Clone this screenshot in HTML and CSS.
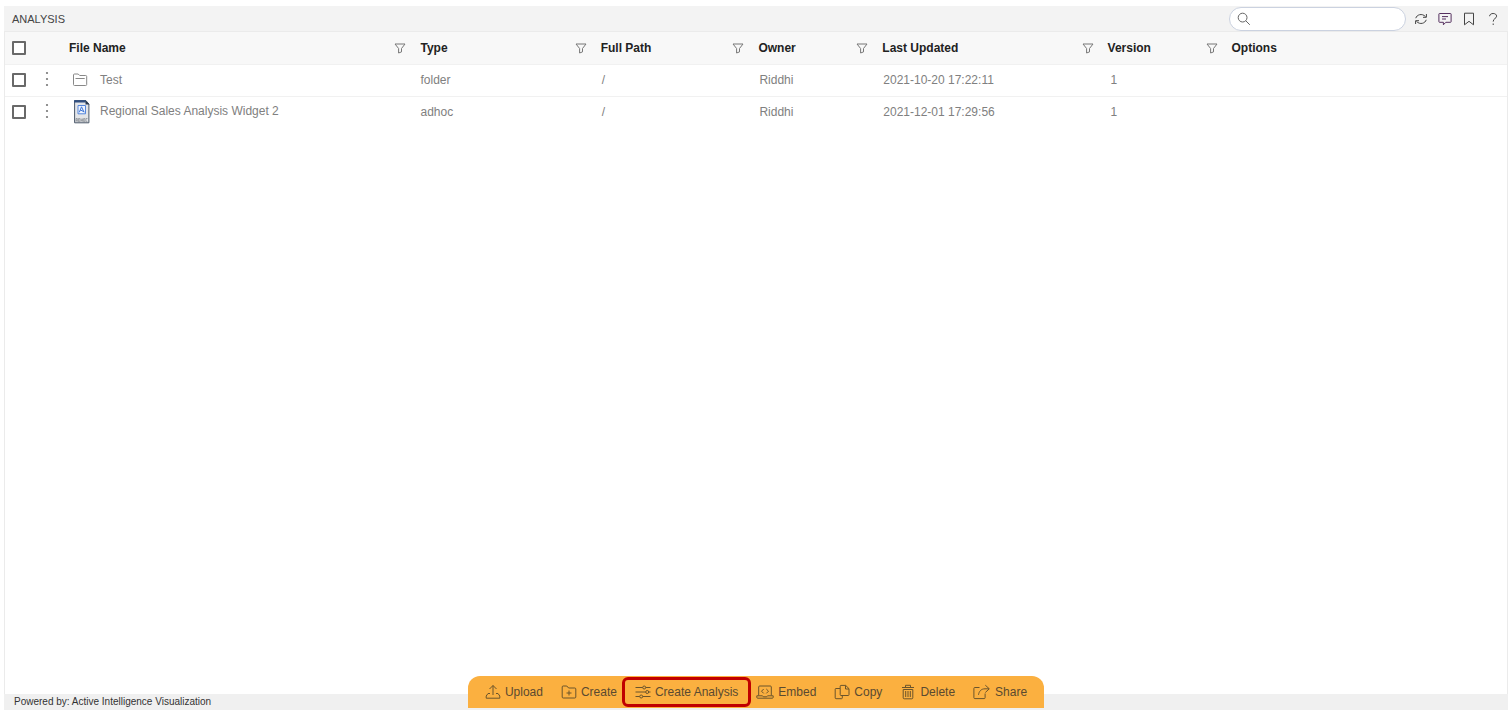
FILE: index.html
```html
<!DOCTYPE html>
<html lang="en">
<head>
<meta charset="utf-8">
<title>Analysis</title>
<link rel="stylesheet" href="styles.css">
</head>
<body>
<svg class="sprite" aria-hidden="true">
  <symbol id="filter" viewBox="0 0 12 12"><path d="M1 2h10L7.500 6.500v3.400L4.600 11V6.500z"/></symbol>
  <symbol id="dots" viewBox="0 0 4 16"><circle cx="2" cy="2" r="1.1"/><circle cx="2" cy="8" r="1.1"/><circle cx="2" cy="14" r="1.1"/></symbol>
</svg>
<div class="app">
  <header class="topbar">
    <h1 class="title">ANALYSIS</h1>
    <label class="search">
      <svg class="search-icon" viewBox="0 0 14 14" aria-hidden="true"><circle cx="5.6" cy="5.6" r="4.4"/><path d="M8.800 8.800l4 4"/></svg>
      <input class="search-input" type="text" aria-label="Search">
    </label>
    <nav class="tools">
      <button class="tool" type="button" aria-label="Refresh"><svg viewBox="0 0 14 14"><path d="M1.800 6.200C2.600 2.800 8 .8 11.500 4.600M12.400 2v3.300H9M12.200 7.800C11.400 11.200 6 13.200 2.500 9.400M1.600 12V8.700H5"/></svg></button>
      <button class="tool tool-comment" type="button" aria-label="Comments"><svg viewBox="0 0 14 14"><path d="M1.500 1.500h11q.6 0 .6.6v7.600q0 .6-.6.6H7.800L5.400 12.800v-2.500H1.500q-.6 0-.6-.6V2.100q0-.6.6-.6zM4 4.600h6M4 7h4"/></svg></button>
      <button class="tool" type="button" aria-label="Bookmark"><svg viewBox="0 0 14 14"><path d="M2.500 1.200h9v11.600L7 9.300 2.500 12.800z"/></svg></button>
      <button class="tool" type="button" aria-label="Help"><svg viewBox="0 0 14 14"><path d="M3.600 4.200C3.700 2.400 5.200 1.500 7.100 1.500c2 0 3.500 1 3.500 2.700C10.600 6.500 7.200 6.400 7.200 9.600M7.200 11.500v1.500"/></svg></button>
    </nav>
  </header>
  <main class="content">
    <table class="files">
      <colgroup><col class="c-check"><col class="c-menu"><col class="c-name"><col class="c-type"><col class="c-path"><col class="c-owner"><col class="c-date"><col class="c-version"><col></colgroup>
      <thead>
        <tr>
          <th><input class="check" type="checkbox" aria-label="Select all"></th>
          <th></th>
          <th><div class="head">File Name<button class="filter" type="button" aria-label="Filter file name"><svg><use href="#filter"/></svg></button></div></th>
          <th><div class="head">Type<button class="filter" type="button" aria-label="Filter type"><svg><use href="#filter"/></svg></button></div></th>
          <th><div class="head">Full Path<button class="filter" type="button" aria-label="Filter full path"><svg><use href="#filter"/></svg></button></div></th>
          <th><div class="head">Owner<button class="filter" type="button" aria-label="Filter owner"><svg><use href="#filter"/></svg></button></div></th>
          <th><div class="head">Last Updated<button class="filter" type="button" aria-label="Filter last updated"><svg><use href="#filter"/></svg></button></div></th>
          <th><div class="head">Version<button class="filter" type="button" aria-label="Filter version"><svg><use href="#filter"/></svg></button></div></th>
          <th><div class="head">Options</div></th>
        </tr>
      </thead>
      <tbody>
        <tr>
          <td><input class="check" type="checkbox" aria-label="Select Test"></td>
          <td><button class="more" type="button" aria-label="Actions for Test"><svg><use href="#dots"/></svg></button></td>
          <td><div class="file"><svg class="file-icon folder" viewBox="0 0 18 24"><path d="M1.500 16.500V7q0-1 1-1h3.700l1.500 1.500h6q1 0 1 1v8q0 1-1 1H2.500q-1 0-1-1zM3.500 10.500h9.200"/></svg>Test</div></td>
          <td class="type">folder</td><td class="path">/</td><td>Riddhi</td><td>2021-10-20 17:22:11</td><td class="version">1</td><td></td>
        </tr>
        <tr>
          <td><input class="check" type="checkbox" aria-label="Select Regional Sales Analysis Widget 2"></td>
          <td><button class="more" type="button" aria-label="Actions for Regional Sales Analysis Widget 2"><svg><use href="#dots"/></svg></button></td>
          <td><div class="file"><svg class="file-icon" viewBox="0 0 18 24"><path d="M2.600.6h11.300l3 3.400v18.800H2.600z" fill="#e3e5e8" stroke="#4b5868"/><path d="M2.100.2h11.700v2.300H2.100z" fill="#304f80" stroke="none"/><path d="M13.500.2v4.300h4z" fill="#28394f" stroke="none"/><path d="M6 5.500h7.500v8.300H6z" fill="#eef4ff" stroke="#5486dc"/><path d="M7.300 12.300l2.200-5.500 2.600 5.500M8 9.800l4.200 2" stroke="#4077d5"/><path d="M4 21.800v-3.300h1.300v3.300M4 20.200h1.300M6.500 18.500v3.300h1.300v-3.300zM9 18.500v3.300m1.400-3.300v3.300M9 20.200h1.400M11.600 18.500v3.300h1.200v-3.300zM15.500 18.500H14v3.300h1.500" stroke="#737980" stroke-width=".6"/></svg><span class="file-label">Regional Sales Analysis Widget 2</span></div></td>
          <td class="type">adhoc</td><td class="path">/</td><td>Riddhi</td><td>2021-12-01 17:29:56</td><td class="version">1</td><td></td>
        </tr>
      </tbody>
    </table>
  </main>
  <footer class="footer">Powered by: Active Intelligence Visualization</footer>
  <div class="actions" role="toolbar" aria-label="File actions">
    <button class="action" type="button"><svg viewBox="0 0 16 16"><path d="M8 11V1.500M4.500 5L8 1.500 11.500 5M5 9.500H3L1.200 12v2.200h13.600V12L13 9.500h-2"/></svg>Upload</button>
    <button class="action" type="button"><svg viewBox="0 0 16 16"><path d="M1.200 13V3q0-1 1-1h3.600l1.800 2h6.200q1 0 1 1v8q0 1-1 1H2.200q-1 0-1-1zM8 6.500v5M5.500 9h5"/></svg>Create</button>
    <button class="action highlighted" type="button"><svg viewBox="0 0 16 16"><path d="M.5 3.500h7.200M10.700 3.500h4.800M.5 8h10.200M13.700 8h1.800M.5 12.500h4.200M7.700 12.500h7.800"/><circle cx="9.200" cy="3.500" r="1.500"/><circle cx="12.200" cy="8" r="1.500"/><circle cx="6.200" cy="12.500" r="1.500"/></svg>Create Analysis</button>
    <button class="action" type="button"><svg class="wide" viewBox="0 0 18 16"><path d="M2.700 11.500V3q0-1 1-1h10.600q1 0 1 1v8.500M.8 11.800h5.700l.8 1h3.400l.8-1h5.700v1.500q0 .9-.9.9H1.700q-.9 0-.9-.9zM7.700 5L5.500 7.200l2.200 2.200M10.300 5l2.200 2.200-2.200 2.200"/></svg>Embed</button>
    <button class="action" type="button"><svg viewBox="0 0 16 16"><path d="M6.200 10.200V2.200q0-.8.8-.8h4.700L15 4.700v6q0 .8-.8.8H7q-.8 0-.8-.8zM11.500 1.500V5H15M6 4.500H2q-.8 0-.8.8v8.600q0 .8.8.8h5.500q.8 0 .8-.8v-2"/></svg>Copy</button>
    <button class="action" type="button"><svg viewBox="0 0 16 16"><path d="M2 3.500h12M5.500 3.500V1.300h5v2.200M3.200 5.500v8.300q0 1 1 1h7.600q1 0 1-1V5.500zM5.700 7v6M8 7v6M10.300 7v6"/></svg>Delete</button>
    <button class="action" type="button"><svg class="wide" viewBox="0 0 18 16"><path d="M6.500 3.500H1.800q-.9 0-.9.900v9.300q0 .9.900.9h9.400q.9 0 .9-.9V9.500M12.300 1.200l4 3.600-4 3.700M16 4.800h-4C8 4.800 6 7.500 5.500 10.800"/></svg>Share</button>
  </div>
</div>
</body>
</html>
```
FILE: styles.css
```css
* { box-sizing: border-box; }
body { margin: 0; background: #fff; color: #808080; font: 12px/16px "Liberation Sans", Arial, sans-serif; }
button { font: inherit; color: inherit; background: none; border: 0; padding: 0; display: flex; align-items: center; }
svg { fill: none; stroke: #555; stroke-width: 1; flex: none; display: block; }
.sprite { position: absolute; width: 0; height: 0; }
.app { position: relative; display: flex; flex-direction: column; min-height: 100vh; padding: 6px 1px 1px 4px; }
.topbar { display: flex; align-items: center; height: 25px; padding: 0 8px; background: #f3f3f3; }
.title { flex: 1; margin: 0; font-size: 11px; font-weight: 400; color: #444; }
.search { display: flex; align-items: center; gap: 6px; width: 177px; height: 24px; padding: 0 8px 0 7px; margin-right: 8px; border: 1px solid #cbd2e0; border-radius: 12px; background: #fff; }
.search-icon { width: 14px; height: 14px; stroke: #666; }
.search-input { flex: 1; min-width: 0; border: 0; outline: 0; padding: 0; background: none; font: inherit; }
.tools { display: flex; gap: 10px; }
.tool svg { width: 14px; height: 14px; stroke: #444; }
.tool-comment svg { stroke: #55305f; }
.content { flex: 1; border: 1px solid #ebebeb; border-bottom: 0; }
.files { width: 100%; table-layout: fixed; border-collapse: collapse; }
.c-check { width: 34px; }
.c-menu { width: 30px; }
.c-name { width: 23.4%; }
.c-type { width: 12%; }
.c-path { width: 10.5%; }
.c-owner, .c-version { width: 8.25%; }
.c-date { width: 15%; }
.files th { height: 32px; padding: 0; background: #f8f8f8; color: #222; text-align: left; }
.files td { height: 32px; padding: 0 0 0 1px; }
.files tr { border-bottom: 1px solid #f1f1f1; }
.files tbody tr:last-child { border-bottom: 0; }
.files .type { padding-left: 0; }
.files .version { padding-left: 3px; }
.head { display: flex; align-items: center; justify-content: space-between; padding-right: 14px; }
.filter svg { width: 12px; height: 12px; stroke: #777; }
.check { appearance: none; display: block; width: 14px; height: 14px; margin: 0 0 0 7px; border: 2px solid #696969; border-radius: 1px; background: #fff; }
.files td .check { margin-left: 6px; }
.more svg { width: 4px; height: 16px; stroke: none; fill: #777; }
.files .more { margin-left: 5px; padding-bottom: 2px; }
.file { display: flex; align-items: center; gap: 10px; padding-left: 2px; }
.file-icon { width: 18px; height: 24px; }
.folder { stroke: #888; }
.file-label { padding-bottom: 2px; }
.footer { height: 16px; padding: 0 10px; background: #f0f0f0; color: #333; font-size: 10px; }
.actions { position: absolute; bottom: 3px; left: 4px; right: 1px; margin: 0 auto; width: fit-content; display: flex; align-items: center; gap: 18px; height: 32px; padding: 0 17px; border-radius: 12px 12px 0 0; background: #fbb040; color: #5a4a30; white-space: nowrap; }
.action { gap: 4px; height: 30px; }
.action svg { width: 16px; height: 16px; stroke: #6b542b; }
.action .wide { width: 18px; }
.highlighted { margin: 0 -13px; padding: 0 10px; border: 3px solid #c00000; border-radius: 6px; }
```
